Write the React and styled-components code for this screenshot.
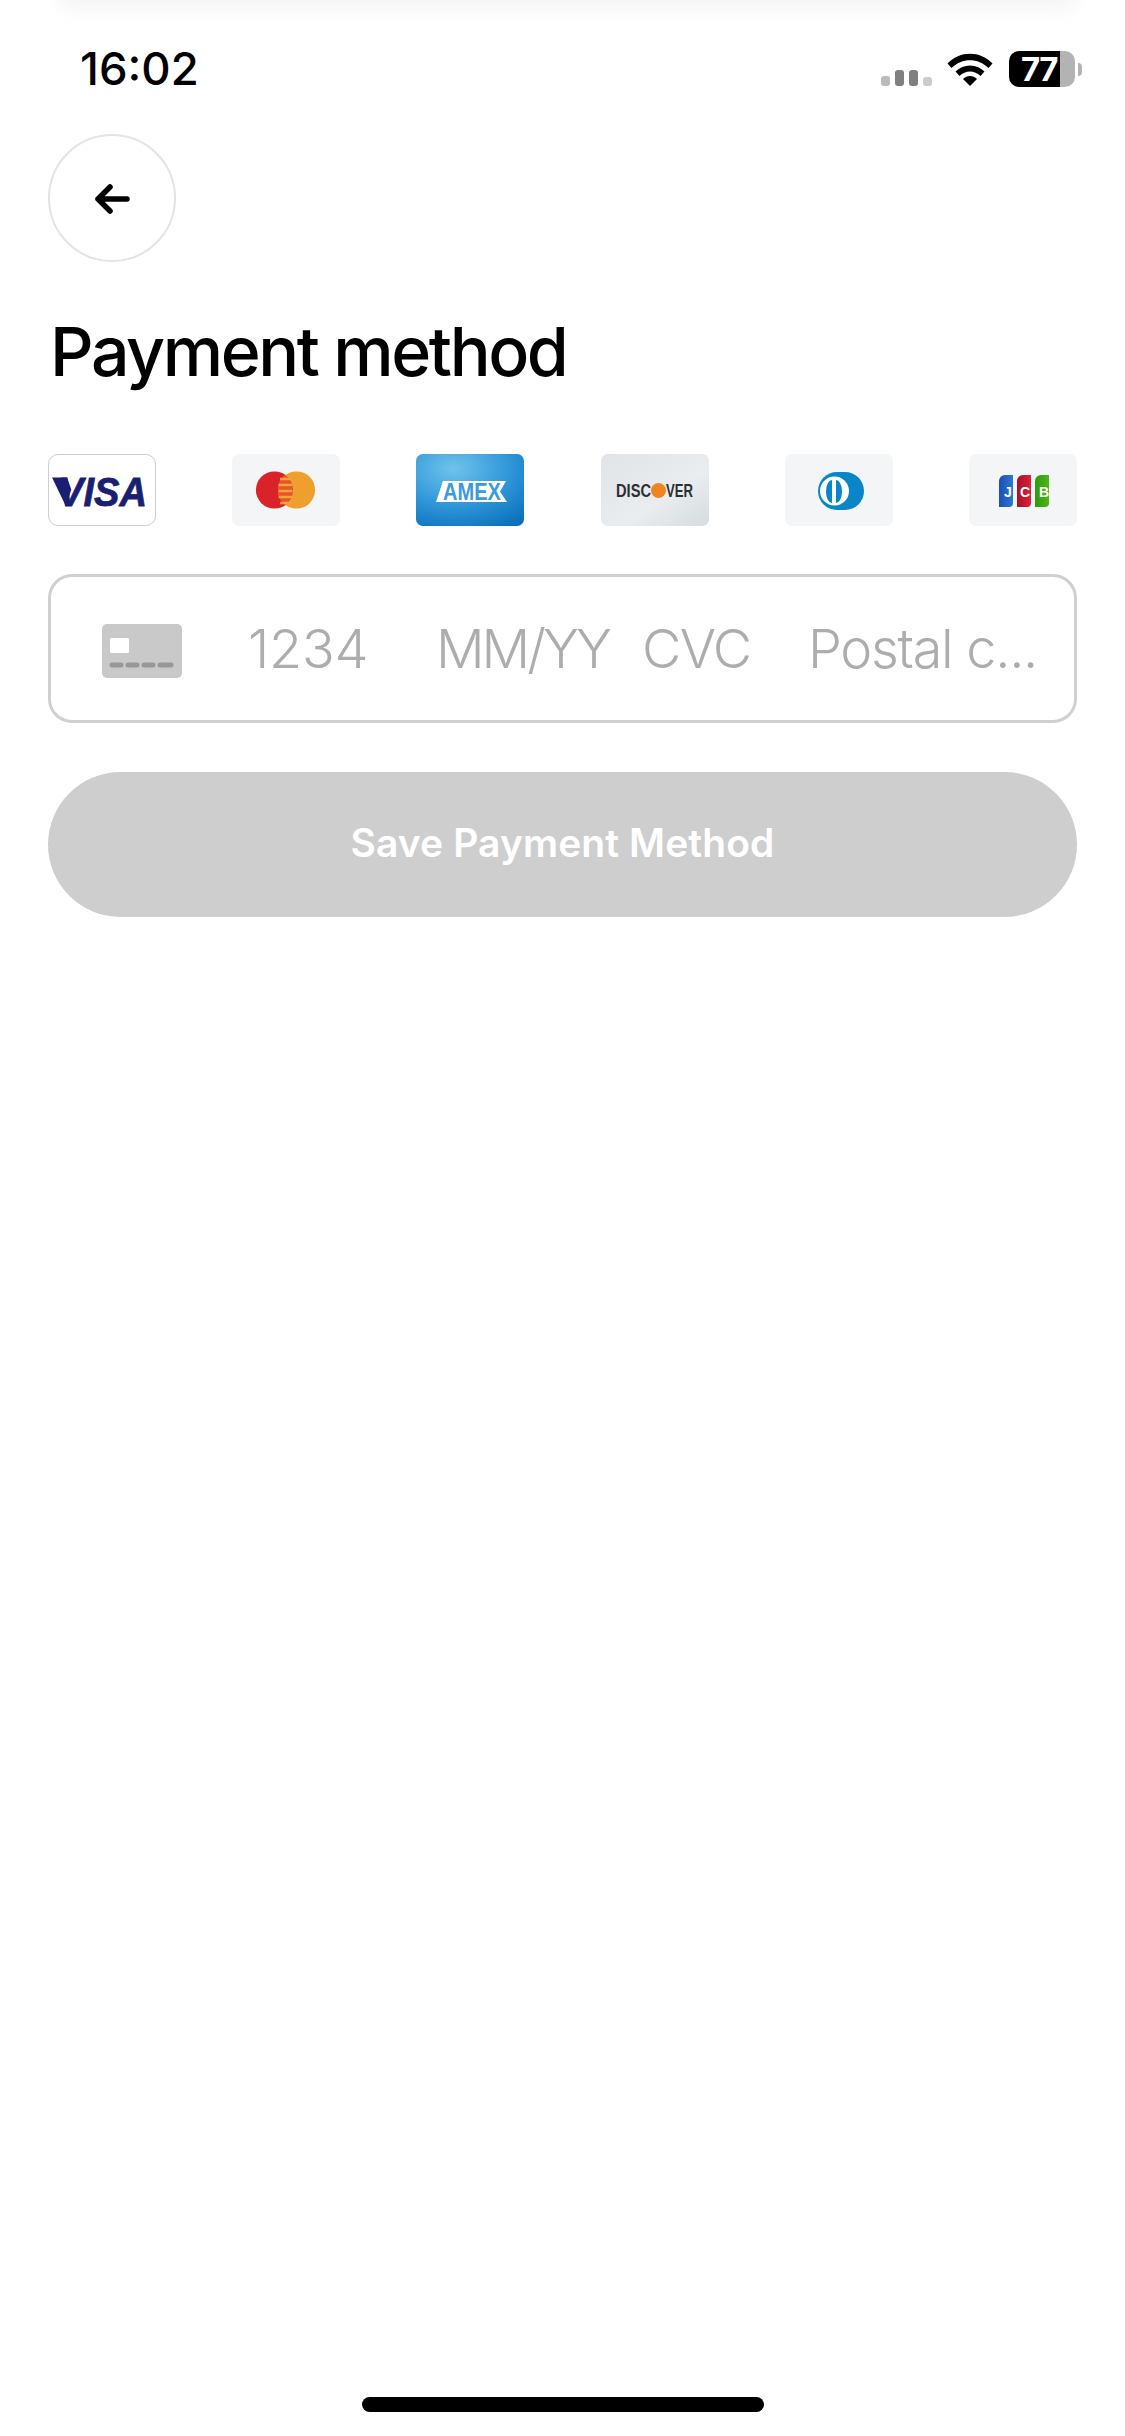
import React from 'react';
import styled, { createGlobalStyle } from 'styled-components';

const GlobalStyle = createGlobalStyle`
  html, body {
    margin: 0;
    padding: 0;
    background: #fff;
  }
`;

const Page = styled.div`
  position: relative;
  display: flex;
  flex-direction: column;
  width: 1125px;
  height: 2436px;
  overflow: hidden;
  background: #fff;
  font-family: Inter, "Liberation Sans", sans-serif;
`;

const TopShade = styled.div`
  position: absolute;
  top: -14px;
  left: 60px;
  right: 50px;
  height: 20px;
  background: #f2f2f2;
  filter: blur(9px);
`;

const StatusBar = styled.div`
  display: flex;
  justify-content: space-between;
  align-items: center;
  height: 52px;
  margin-top: 43px;
  padding: 0 48px 0 80px;
`;

const Time = styled.span`
  font-size: 45.500px;
  font-weight: 500;
  line-height: 52px;
  color: #000;
`;

const StatusIcons = styled.div`
  display: flex;
  align-items: center;
`;

const Signal = styled.div`
  display: flex;
  align-items: flex-end;
  gap: 5px;
  height: 16px;
  margin: 17px 15px 0 0;
`;

const SignalBar = styled.span`
  width: 9px;
  height: ${(p) => p.$h}px;
  border-radius: 3px;
  background: ${(p) => p.$c};
`;

const Battery = styled.div`
  display: flex;
  align-items: center;
  margin-left: 16px;
  margin-right: -5px;
`;

const BatteryBody = styled.div`
  width: 66px;
  height: 36px;
  border-radius: 10px;
  background: linear-gradient(to right, #000 77%, #b3b3b3 77%);
  color: #fff;
  font-size: 33px;
  font-weight: 700;
  line-height: 36px;
  padding-left: 12px;
  box-sizing: border-box;
  letter-spacing: -1.5px;
`;

const BatteryNub = styled.span`
  width: 4px;
  height: 13px;
  margin-left: 3px;
  border-radius: 0 4px 4px 0;
  background: #b3b3b3;
`;

const Content = styled.div`
  display: flex;
  flex-direction: column;
  padding: 39px 48px 0;
`;

const BackButton = styled.button`
  display: flex;
  align-items: center;
  justify-content: center;
  width: 128px;
  height: 128px;
  padding: 0;
  border: 2px solid #e4e4e4;
  border-radius: 50%;
  background: #fff;
`;

const Title = styled.h1`
  margin: 47px 0 0 2px;
  font-size: 68px;
  font-weight: 500;
  line-height: 84px;
  letter-spacing: -2.4px;
  color: #000;
`;

const CardRow = styled.div`
  display: flex;
  justify-content: space-between;
  margin-top: 61px;
`;

const CardTile = styled.div`
  width: 108px;
  height: 72px;
  box-sizing: border-box;
  overflow: hidden;
  background: ${(p) => p.$bg || '#f3f5f6'};
  border: ${(p) => (p.$outlined ? '1.5px solid #cfcfcf' : 'none')};
  border-radius: ${(p) => (p.$outlined ? '10px' : '7px')};

  svg {
    display: block;
    width: 100%;
    height: 100%;
  }
`;

const CardForm = styled.div`
  display: flex;
  align-items: center;
  height: 149px;
  margin-top: 48px;
  padding-left: 51px;
  box-sizing: border-box;
  border: 3px solid #d0d0d0;
  border-radius: 24px;
`;

const FieldIcon = styled.svg`
  flex: none;
  width: 80px;
  height: 54px;
  margin: 4px 66px 0 0;
`;

const Field = styled.span`
  flex: none;
  width: ${(p) => p.$w}px;
  font-size: 54px;
  font-weight: 350;
  line-height: 64px;
  letter-spacing: ${(p) => p.$ls || 0}px;
  white-space: nowrap;
  color: #adadad;
`;

const SaveButton = styled.button`
  height: 145px;
  margin-top: 49px;
  padding: 0 0 5px;
  border: none;
  border-radius: 73px;
  background: #cecece;
  color: #fff;
  font-family: Inter, "Liberation Sans", sans-serif;
  font-size: 39px;
  font-weight: 600;
  letter-spacing: 0.1px;
`;

const HomeBar = styled.div`
  align-self: center;
  width: 402px;
  height: 15px;
  margin-top: auto;
  margin-bottom: 24px;
  border-radius: 8px;
  background: #000;
`;

const ArrowLeft = () => (
  <svg width="36" height="36" viewBox="0 0 36 36" fill="none" stroke="#000" strokeWidth="5.5" strokeLinecap="round" strokeLinejoin="round">
    <path d="M33 19H4M16 7 4 19l12 12" />
  </svg>
);

const Wifi = () => (
  <svg width="46" height="34" viewBox="0 0 46 34">
    <path d="M0.5 11.5C13 -1.5 33 -1.5 45.5 11.5L41.5 16C31 5.5 15 5.5 4.5 16Z" fill="#000" />
    <path d="M8.5 19.5C16.5 11.5 29.5 11.5 37.5 19.5L33.5 24C27.5 18 18.5 18 12.5 24Z" fill="#000" />
    <path d="M16 27C20 23 26 23 30 27L23 34Z" fill="#000" />
  </svg>
);

const VisaLogo = () => (
  <svg viewBox="0 0 105 69">
    <path d="M3 22h15l4 12-5 17Z" fill="#1a1f71" />
    <text x="9" y="50" textLength="88" lengthAdjust="spacingAndGlyphs" fontFamily="'Liberation Sans', sans-serif" fontSize="40" fontWeight="700" fontStyle="italic" fill="#1a1f71" stroke="#1a1f71" strokeWidth="0.8">VISA</text>
  </svg>
);

const MastercardLogo = () => (
  <svg viewBox="0 0 108 72">
    <circle cx="42.5" cy="36" r="18.6" fill="#d9222a" />
    <circle cx="64.5" cy="36" r="18.6" fill="#ee9f2d" />
    <path d="M53.5 21a18.6 18.6 0 0 1 0 30 18.6 18.6 0 0 1 0-30Z" fill="#e8542a" />
    <path d="M48 25h11M46.6 31h13.8M46.6 37h13.8M46.6 43h13.8M48 49h11" stroke="#f2a43a" strokeWidth="2.6" />
  </svg>
);

const AmexLogo = () => (
  <svg viewBox="0 0 108 72">
    <defs>
      <radialGradient id="amexBg" cx="35%" cy="20%" r="95%">
        <stop offset="0" stopColor="#6fc3ec" />
        <stop offset="0.55" stopColor="#2f96d8" />
        <stop offset="1" stopColor="#0a70ba" />
      </radialGradient>
    </defs>
    <rect width="108" height="72" fill="url(#amexBg)" />
    <path d="M27 27H90L84 37.500 91 48H20Z" fill="#fff" />
    <text x="27" y="46" textLength="58" lengthAdjust="spacingAndGlyphs" fontFamily="'Liberation Sans', sans-serif" fontSize="23" fontWeight="700" fill="#3a9bdc">AMEX</text>
  </svg>
);

const DiscoverLogo = () => (
  <svg viewBox="0 0 108 72">
    <defs>
      <linearGradient id="discoverBg" x1="0" y1="0" x2="1" y2="1">
        <stop offset="0" stopColor="#e0e4e7" />
        <stop offset="0.6" stopColor="#e9edef" />
        <stop offset="1" stopColor="#d5dbdf" />
      </linearGradient>
    </defs>
    <rect width="108" height="72" fill="url(#discoverBg)" />
    <text x="15" y="43" textLength="35" lengthAdjust="spacingAndGlyphs" fontFamily="'Liberation Sans', sans-serif" fontSize="18" fontWeight="700" fill="#2b2f33">DISC</text>
    <circle cx="57.5" cy="36.500" r="7.5" fill="#f0851f" />
    <text x="65" y="43" textLength="27" lengthAdjust="spacingAndGlyphs" fontFamily="'Liberation Sans', sans-serif" fontSize="18" fontWeight="700" fill="#2b2f33">VER</text>
  </svg>
);

const DinersLogo = () => (
  <svg viewBox="0 0 108 72">
    <path d="M52 18H60a19 19 0 0 1 0 38H52a19 19 0 0 1 0-38Z" fill="#0a86c8" />
    <circle cx="49.5" cy="37" r="14.500" fill="#fff" />
    <path d="M47 26A6 11.500 0 0 0 47 49ZM51 26A6 11.500 0 0 1 51 49Z" fill="#0a86c8" />
  </svg>
);

const JcbLogo = () => (
  <svg viewBox="0 0 108 72" fontFamily="'Liberation Sans', sans-serif" fontWeight="700" fontSize="14" fill="#fff">
    <defs>
      <linearGradient id="jcbBlue" x1="0" y1="0" x2="1" y2="0">
        <stop offset="0" stopColor="#1b4fb0" />
        <stop offset="1" stopColor="#2a78d8" />
      </linearGradient>
      <linearGradient id="jcbRed" x1="0" y1="0" x2="1" y2="0">
        <stop offset="0" stopColor="#a5122a" />
        <stop offset="1" stopColor="#e02038" />
      </linearGradient>
      <linearGradient id="jcbGreen" x1="0" y1="0" x2="1" y2="0">
        <stop offset="0" stopColor="#2f9a0c" />
        <stop offset="1" stopColor="#4cb81a" />
      </linearGradient>
    </defs>
    <path d="M30 27a6 6 0 0 1 6-6h8v28a4 4 0 0 1-4 4H30Z" fill="url(#jcbBlue)" />
    <path d="M48 27a6 6 0 0 1 6-6h8v28a4 4 0 0 1-4 4H48Z" fill="url(#jcbRed)" />
    <path d="M66 27a6 6 0 0 1 6-6h8v28a4 4 0 0 1-4 4H66Z" fill="url(#jcbGreen)" />
    <text x="35" y="43">J</text>
    <text x="51" y="43">C</text>
    <text x="70" y="43">B</text>
  </svg>
);

const CARDS = [
  { name: 'visa', Logo: VisaLogo, outlined: true, bg: '#fff' },
  { name: 'mastercard', Logo: MastercardLogo },
  { name: 'amex', Logo: AmexLogo },
  { name: 'discover', Logo: DiscoverLogo },
  { name: 'diners', Logo: DinersLogo },
  { name: 'jcb', Logo: JcbLogo },
];

const App = () => (
  <Page>
    <GlobalStyle />
    <TopShade />
    <StatusBar>
      <Time>16:02</Time>
      <StatusIcons>
        <Signal>
          <SignalBar $h={10} $c="#bbbbbb" />
          <SignalBar $h={16} $c="#808080" />
          <SignalBar $h={16} $c="#808080" />
          <SignalBar $h={9} $c="#cccccc" />
        </Signal>
        <Wifi />
        <Battery>
          <BatteryBody>77</BatteryBody>
          <BatteryNub />
        </Battery>
      </StatusIcons>
    </StatusBar>
    <Content>
      <BackButton aria-label="Back">
        <ArrowLeft />
      </BackButton>
      <Title>Payment method</Title>
      <CardRow>
        {CARDS.map(({ name, Logo, outlined, bg }) => (
          <CardTile key={name} $outlined={outlined} $bg={bg}>
            <Logo />
          </CardTile>
        ))}
      </CardRow>
      <CardForm>
        <FieldIcon viewBox="0 0 80 54">
          <rect width="80" height="54" rx="5" fill="#c9c9c9" />
          <rect x="8" y="14" width="19" height="15" rx="1.500" fill="#fff" />
          <path d="M10 41h9M26 41h9M42 41h9M58 41h11" stroke="#979797" strokeWidth="5" strokeLinecap="round" />
        </FieldIcon>
        <Field $w={188} $ls={-0.2}>1234</Field>
        <Field $w={206} $ls={-3}>MM/YY</Field>
        <Field $w={166} $ls={-1.5}>CVC</Field>
        <Field $ls={-1.3}>Postal c...</Field>
      </CardForm>
      <SaveButton>Save Payment Method</SaveButton>
    </Content>
    <HomeBar />
  </Page>
);

export default App;
